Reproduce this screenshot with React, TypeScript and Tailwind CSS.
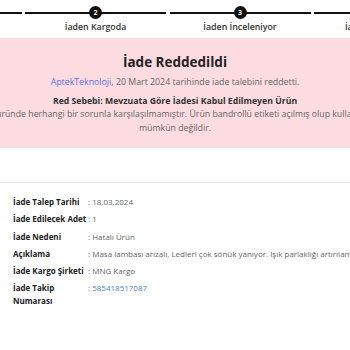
import React from "react";

const steps = [
  { no: 1, label: "Talep Alındı" },
  { no: 2, label: "İaden Kargoda" },
  { no: 3, label: "İaden İnceleniyor" },
  { no: 4, label: "İaden Tamamlandı" },
];

const details: { label: string; value: string; link?: boolean }[] = [
  { label: "İade Talep Tarihi", value: "18.03.2024" },
  { label: "İade Edilecek Adet", value: "1" },
  { label: "İade Nedeni", value: "Hatalı Ürün" },
  {
    label: "Açıklama",
    value: "Masa lambası arızalı, Ledleri çok sönük yanıyor. Işık parlaklığı artırılamıyor.",
  },
  { label: "İade Kargo Şirketi", value: "MNG Kargo" },
  { label: "İade Takip Numarası", value: "585418517087", link: true },
];

export default function App() {
  return (
    <div className="w-[350px] h-[350px] overflow-hidden bg-white font-['Open_Sans',sans-serif]">
      {/* stepper */}
      <div className="h-[38px] flex gap-[3.5px] ml-[-119.5px] pt-[6px]">
        {steps.map((s) => (
          <div key={s.no} className="w-[141px] shrink-0 flex flex-col items-center">
            <div className="relative w-full h-[13px] flex items-center justify-center">
              <div className="absolute inset-x-0 top-[5.5px] h-[2px] bg-[#111]" />
              <div className="relative w-[13px] h-[13px] rounded-full bg-[#111] text-white text-[7px] font-bold flex items-center justify-center leading-none">
                {s.no}
              </div>
            </div>
            <div className="mt-[2px] text-[8.8px] font-semibold text-[#333] whitespace-nowrap leading-[12px]">
              {s.label}
            </div>
          </div>
        ))}
      </div>

      {/* rejected box */}
      <div className="bg-[#fcdce0] h-[110px] flex justify-center">
        <div className="w-[700px] shrink-0 flex flex-col items-center text-center pt-[12px]">
          <h2 className="text-[13.5px] font-bold text-[#222] leading-[24px]">İade Reddedildi</h2>
          <p className="mt-[1px] text-[8.8px] text-[#666] leading-[14px] whitespace-nowrap">
            <span className="text-[#5a6fe0]">AptekTeknoloji</span>, 20 Mart 2024 tarihinde iade talebini reddetti.
          </p>
          <p className="mt-[5px] text-[8.7px] font-bold text-[#333] leading-[14px] whitespace-nowrap">
            Red Sebebi: Mevzuata Göre İadesi Kabul Edilmeyen Ürün
          </p>
          <p className="pl-[10px] text-[8.75px] text-[#666] leading-[13.5px] whitespace-nowrap">
            Ürün incelenmiş olup üründe herhangi bir sorunla karşılaşılmamıştır. Ürün bandrollü etiketi açılmış olup kullanılmış olduğundan iadesi
          </p>
          <p className="text-[8.75px] text-[#666] leading-[13.5px] whitespace-nowrap">mümkün değildir.</p>
        </div>
      </div>

      <div className="h-[34px]" />
      <div className="h-px bg-[#e6e6e6]" />

      {/* details */}
      <div className="pt-[12px] pl-[13px] grid grid-cols-[75px_1fr] gap-y-[4.3px] leading-[13px]">
        {details.map((d) => (
          <React.Fragment key={d.label}>
            <div className="text-[8px] font-bold text-[#222]">{d.label}</div>
            <div className="text-[8px] text-[#666] whitespace-nowrap">
              :{" "}
              {d.link ? <span className="text-[#4a86d8]">{d.value}</span> : d.value}
            </div>
          </React.Fragment>
        ))}
      </div>
    </div>
  );
}
